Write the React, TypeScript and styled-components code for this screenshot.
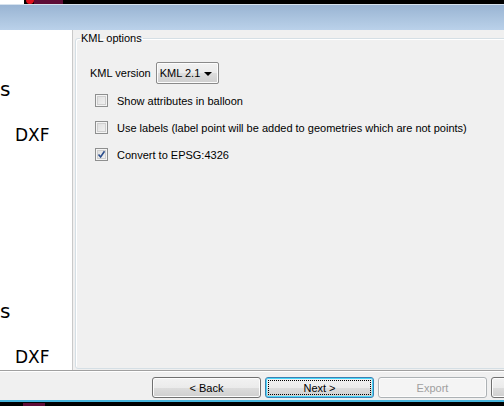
import React from 'react';
import styled, { createGlobalStyle } from 'styled-components';

const Global = createGlobalStyle`
  html, body { margin: 0; padding: 0; background: #000; }
  body { font-family: "Liberation Sans", Arial, sans-serif; font-size: 11px; color: #000; }
  #root { width: 504px; height: 406px; }
`;

const Frame = styled.div`
  width: 504px;
  height: 406px;
  display: flex;
  flex-direction: column;
  overflow: hidden;
  background: #f0f0f0;
`;

const TopStrip = styled.div`
  height: 4px;
  flex-shrink: 0;
  display: flex;
  background: #000;
  overflow: hidden;
`;

const StripPiece = styled.div<{ $w: number; $bg: string; $round?: boolean }>`
  width: ${p => p.$w}px;
  flex-shrink: 0;
  background: ${p => p.$bg};
  border-radius: ${p => (p.$round ? '0 0 6px 6px' : '0')};
`;

const Header = styled.div`
  height: 26px;
  flex-shrink: 0;
  border-top: 1px solid #d6e2ee;
  box-sizing: border-box;
  background: linear-gradient(to bottom, #99b4d3 0%, #aac3de 50%, #bad1ea 100%);
`;

const Body = styled.div`
  height: 340px;
  flex-shrink: 0;
  display: flex;
`;

const LeftPanel = styled.div`
  width: 72px;
  flex-shrink: 0;
  background: #fff;
  border-right: 1px solid #c9c9c9;
  display: flex;
  flex-direction: column;
  font-family: "DejaVu Sans", sans-serif;
  overflow: hidden;
`;

const Clipped = styled.div<{ $top: number }>`
  margin-top: ${p => p.$top}px;
  font-size: 20px;
  line-height: 22px;
  height: 22px;
  flex-shrink: 0;
`;

const Format = styled.div<{ $top: number }>`
  margin-top: ${p => p.$top}px;
  padding-left: 15px;
  font-size: 17px;
  line-height: 20px;
  height: 20px;
  flex-shrink: 0;
`;

const RightPanel = styled.div`
  flex: 1;
  padding: 2px 0 0 2px;
  overflow: hidden;
  display: flex;
  flex-direction: column;
`;

const Group = styled.fieldset`
  margin: 0;
  width: 460px;
  height: 337px;
  flex-shrink: 0;
  box-sizing: border-box;
  border: 1px solid #d5dfe5;
  border-radius: 3px;
  box-shadow: inset 1px 1px 0 #fff;
  padding: 17px 0 0 0;
  display: flex;
  flex-direction: column;
`;

const Legend = styled.legend`
  padding: 0 1px;
  margin-left: 4px;
  font-size: 11px;
  line-height: 13px;
`;

const VersionRow = styled.div`
  display: flex;
  align-items: center;
  gap: 5px;
  height: 22px;
  padding-left: 14px;
`;

const Combo = styled.div`
  width: 63px;
  height: 22px;
  box-sizing: border-box;
  border: 1px solid #8a8a8a;
  border-radius: 2px;
  background: linear-gradient(to bottom, #f2f2f2 0%, #ebebeb 50%, #dddddd 51%, #cfcfcf 100%);
  box-shadow: inset 0 0 0 1px #fcfcfc;
  display: flex;
  align-items: center;
  padding: 0 6px 0 3px;
  justify-content: space-between;
`;

const Arrow = styled.span`
  width: 0;
  height: 0;
  border-left: 4px solid transparent;
  border-right: 4px solid transparent;
  border-top: 4px solid #000;
  margin-top: 2px;
`;

const CheckRow = styled.div<{ $top: number }>`
  display: flex;
  align-items: center;
  gap: 9px;
  margin-top: ${p => p.$top}px;
  padding-left: 19px;
  height: 13px;
`;

const Box = styled.span`
  width: 13px;
  height: 13px;
  box-sizing: border-box;
  border: 1px solid #8e8f8f;
  background: linear-gradient(135deg, #dcdcdc 0%, #f4f4f4 100%);
  box-shadow: inset 0 0 0 1px #f4f4f4, inset 0 0 0 2px #cfcfcf;
  flex-shrink: 0;
  display: flex;
  align-items: center;
  justify-content: center;
`;

const ButtonBar = styled.div`
  height: 30px;
  flex-shrink: 0;
  box-sizing: border-box;
  border-top: 1px solid #a0a0a0;
  box-shadow: inset 0 1px 0 #fff;
  display: flex;
  gap: 4px;
  padding: 6px 0 0 152px;
`;

const Button = styled.div<{ $focus?: boolean; $disabled?: boolean }>`
  width: 109px;
  height: 21px;
  flex-shrink: 0;
  box-sizing: border-box;
  border: 1px solid ${p => (p.$focus ? '#3c7fb1' : p.$disabled ? '#adb2b5' : '#707070')};
  border-radius: 3px;
  background: ${p =>
    p.$disabled
      ? '#f4f4f4'
      : 'linear-gradient(to bottom, #f2f2f2 0%, #ebebeb 50%, #dddddd 51%, #cfcfcf 100%)'};
  box-shadow: ${p => (p.$focus ? 'inset 0 0 0 1px #48d8fb' : 'inset 0 0 0 1px #fcfcfc')};
  color: ${p => (p.$disabled ? '#a0a0a0' : '#000')};
  display: flex;
  align-items: center;
  justify-content: center;
  padding: 2px;
`;

const FocusRing = styled.div`
  flex: 1;
  align-self: stretch;
  border: 1px dotted #000;
  display: flex;
  align-items: center;
  justify-content: center;
`;

const CyanLine = styled.div`
  height: 2px;
  flex-shrink: 0;
  background: #46b4dc;
`;

const BottomStrip = styled.div`
  height: 4px;
  flex-shrink: 0;
  display: flex;
  background: #000;
  padding-top: 1px;
  box-sizing: border-box;
`;

const Check = () => (
  <svg width="9" height="9" viewBox="0 0 9 9">
    <path d="M1.5 4.5 L3.6 7 L7.5 1.2" fill="none" stroke="#2b4d8c" strokeWidth="1.6" />
  </svg>
);

export default function App() {
  return (
    <>
      <Global />
      <Frame>
        <TopStrip>
          <StripPiece $w={24} $bg="#fff" />
          <StripPiece $w={2} $bg="#000" />
          <StripPiece $w={8} $bg="#e0101c" $round />
          <StripPiece $w={29} $bg="#5e0c36" />
        </TopStrip>
        <Header />
        <Body>
          <LeftPanel>
            <Clipped $top={48}>s</Clipped>
            <Format $top={25}>DXF</Format>
            <Clipped $top={155}>s</Clipped>
            <Format $top={25}>DXF</Format>
          </LeftPanel>
          <RightPanel>
            <Group>
              <Legend>KML options</Legend>
              <VersionRow>
                <span>KML version</span>
                <Combo>
                  <span>KML 2.1</span>
                  <Arrow />
                </Combo>
              </VersionRow>
              <CheckRow $top={10}>
                <Box />
                <span>Show attributes in balloon</span>
              </CheckRow>
              <CheckRow $top={14}>
                <Box />
                <span>Use labels (label point will be added to geometries which are not points)</span>
              </CheckRow>
              <CheckRow $top={14}>
                <Box>
                  <Check />
                </Box>
                <span>Convert to EPSG:4326</span>
              </CheckRow>
            </Group>
          </RightPanel>
        </Body>
        <ButtonBar>
          <Button>&lt; Back</Button>
          <Button $focus>
            <FocusRing>Next &gt;</FocusRing>
          </Button>
          <Button $disabled>Export</Button>
          <Button />
        </ButtonBar>
        <CyanLine />
        <BottomStrip>
          <StripPiece $w={23} $bg="#000" />
          <StripPiece $w={22} $bg="#5e0c36" />
        </BottomStrip>
      </Frame>
    </>
  );
}
